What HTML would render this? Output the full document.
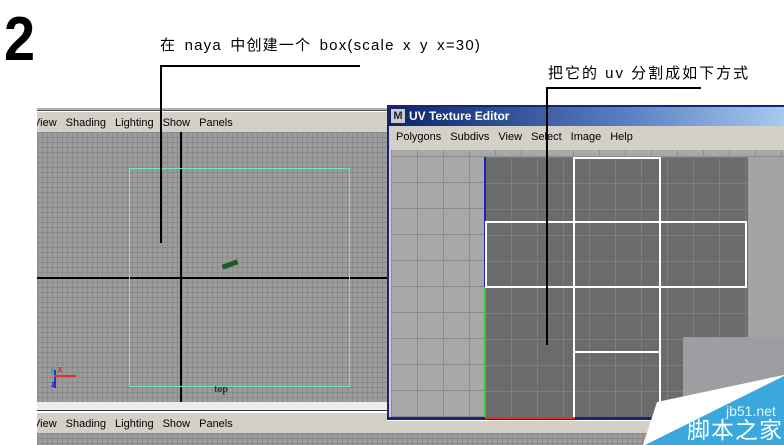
<!DOCTYPE html>
<html><head><meta charset="utf-8"><style>
*{margin:0;padding:0;box-sizing:border-box}
body{width:784px;height:445px;overflow:hidden;background:#fff;position:relative;font-family:"Liberation Sans","Noto Sans CJK SC",sans-serif}
.a{position:absolute;white-space:nowrap}
.menu{font-size:11px;color:#000;background:#d4d0c8;}
.menu span{margin-right:9px}
.grid{background-color:#9c9c9c;background-image:linear-gradient(#8a8a8a 1px,transparent 1px),linear-gradient(90deg,#8a8a8a 1px,transparent 1px);background-size:5px 5px}
</style></head><body>
<div class="a" style="left:4px;top:9px;font-size:62px;line-height:62px;font-weight:bold;transform:scaleX(.9);transform-origin:left">2</div>
<div class="a" style="left:160px;top:37px;font-size:15px;line-height:18px;color:#000;letter-spacing:1.2px;word-spacing:3px">在 naya 中创建一个 box(scale x y x=30)</div>
<div class="a" style="left:548px;top:65px;font-size:15px;line-height:18px;color:#000;letter-spacing:2px">把它的 uv 分割成如下方式</div>

<div class="a" style="left:37px;top:108px;width:350px;height:3px;background:#b0b0b0;border-bottom:1px solid #555"></div>
<div class="a menu" style="left:37px;top:112px;width:350px;height:20px;line-height:22px;overflow:hidden"><span style="margin-left:-4px">View</span><span>Shading</span><span>Lighting</span><span>Show</span><span>Panels</span></div>
<div class="a grid" style="left:37px;top:132px;width:350px;height:270px"></div>
<div class="a" style="left:37px;top:277px;width:350px;height:2px;background:#000"></div>
<div class="a" style="left:180px;top:132px;width:2px;height:270px;background:#000"></div>
<div class="a" style="left:129px;top:168px;width:221px;height:219px;border:1px solid #6fe3c3"></div>
<div class="a" style="left:222px;top:262px;width:16px;height:5px;background:#1e5a2a;transform:rotate(-20deg)"></div>
<div class="a" style="left:214px;top:384px;font-size:10px;font-weight:bold;color:#234;font-family:'Liberation Serif',serif">top</div>
<div class="a" style="left:54px;top:370px;width:2px;height:18px;background:#2233dd"></div>
<div class="a" style="left:54px;top:375px;width:22px;height:2px;background:#d33"></div>
<div class="a" style="left:50px;top:364px;font-size:9px;font-weight:bold;color:#3a8"><span>y</span> <span style="color:#d33">x</span></div>
<div class="a" style="left:51px;top:379px;font-size:9px;font-weight:bold;color:#22c">z</div>
<div class="a" style="left:37px;top:402px;width:350px;height:9px;background:#ececec;border-bottom:1px solid #333"></div>
<div class="a menu" style="left:37px;top:413px;width:400px;height:20px;line-height:22px;overflow:hidden"><span style="margin-left:-4px">View</span><span>Shading</span><span>Lighting</span><span>Show</span><span>Panels</span></div>
<div class="a grid" style="left:37px;top:433px;width:750px;height:12px"></div>

<div class="a" style="left:387px;top:105px;width:397px;height:317px;background:#d4d0c8;border:2px solid #1a237a;border-right:none"></div>
<div class="a" style="left:389px;top:107px;width:395px;height:19px;background:linear-gradient(90deg,#0a246a,#5a7fc0 60%,#a6caf0);color:#fff;font-weight:bold;font-size:12px;line-height:19px;padding-left:20px">UV Texture Editor</div>
<div class="a" style="left:391px;top:109px;width:14px;height:14px;background:#ccc;color:#223;font-size:11px;font-weight:bold;line-height:14px;text-align:center">M</div>
<div class="a menu" style="left:389px;top:127px;width:395px;height:21px;line-height:21px;padding-left:7px"><span>Polygons</span><span>Subdivs</span><span>View</span><span>Select</span><span>Image</span><span>Help</span></div>
<div class="a" style="left:391px;top:150px;width:393px;height:268px;background:#a8a8a8;background-image:linear-gradient(#8c8c8c 1px,transparent 1px),linear-gradient(90deg,#8c8c8c 1px,transparent 1px);background-size:26px 26px;background-position:0 6px"></div>
<div class="a" style="left:485px;top:157px;width:263px;height:261px;background:#6b6b6b;background-image:linear-gradient(#7e7e7e 1px,transparent 1px),linear-gradient(90deg,#7e7e7e 1px,transparent 1px);background-size:26px 26px"></div>
<div class="a" style="left:748px;top:157px;width:36px;height:261px;background:#a4a4a4"></div>
<div class="a" style="left:683px;top:337px;width:101px;height:85px;background:#9d9da2"></div>
<div class="a" style="left:484px;top:157px;width:2px;height:130px;background:#2020c0"></div>
<div class="a" style="left:484px;top:287px;width:2px;height:131px;background:#3c3"></div>
<div class="a" style="left:573px;top:157px;width:88px;height:261px;border-left:2px solid #fff;border-right:2px solid #fff;border-top:2px solid #fff"></div>
<div class="a" style="left:485px;top:221px;width:262px;height:67px;border:2px solid #fff"></div>
<div class="a" style="left:573px;top:351px;width:88px;height:2px;background:#fff"></div>
<div class="a" style="left:387px;top:417px;width:397px;height:3px;background:#1a237a"></div>
<div class="a" style="left:485px;top:417px;width:90px;height:2px;background:#d33"></div>
<div class="a" style="left:387px;top:420px;width:397px;height:13px;background:#d4d0c8;border-top:1px solid #fff"></div>

<div class="a" style="left:160px;top:65px;width:200px;height:2px;background:#000"></div>
<div class="a" style="left:160px;top:65px;width:2px;height:178px;background:#000"></div>
<div class="a" style="left:546px;top:87px;width:155px;height:2px;background:#000"></div>
<div class="a" style="left:546px;top:87px;width:2px;height:258px;background:#000"></div>

<svg class="a" style="left:0;top:0" width="784" height="445"><polygon points="643,445 657,402 784,375 784,445" fill="#fff"/><polygon points="645,445 784,376 784,445" fill="#3aa8dc"/></svg>
<div class="a" style="left:726px;top:403px;font-size:14px;color:#e8f4ff">jb51.net</div>
<div class="a" style="left:687px;top:416px;font-size:23px;line-height:28px;color:#fff;letter-spacing:1px">脚本之家</div>
</body></html>
